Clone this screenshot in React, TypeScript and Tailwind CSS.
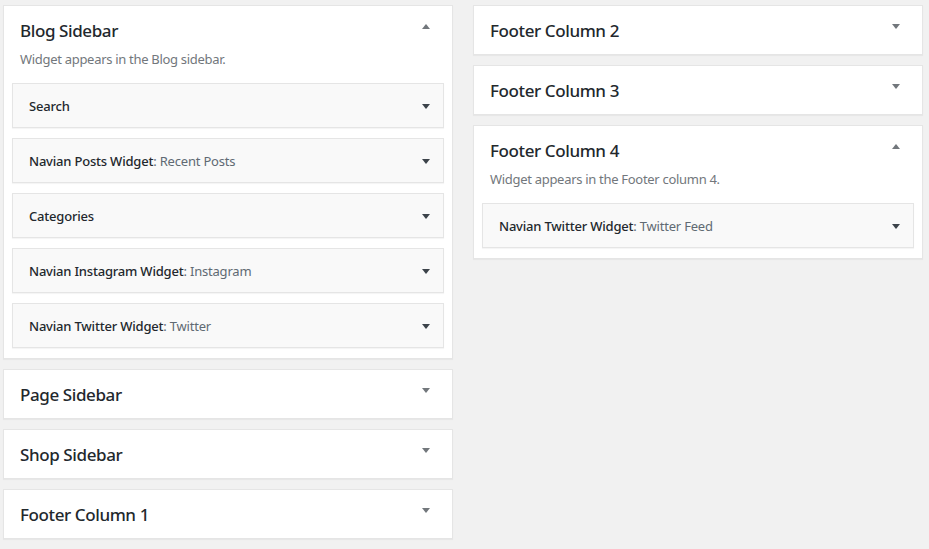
import React from 'react'

type Widget = { name: string; title?: string }

type Area = {
  name: string
  open?: boolean
  description?: string
  widgets?: Widget[]
}

const leftAreas: Area[] = [
  {
    name: 'Blog Sidebar',
    open: true,
    description: 'Widget appears in the Blog sidebar.',
    widgets: [
      { name: 'Search' },
      { name: 'Navian Posts Widget', title: 'Recent Posts' },
      { name: 'Categories' },
      { name: 'Navian Instagram Widget', title: 'Instagram' },
      { name: 'Navian Twitter Widget', title: 'Twitter' },
    ],
  },
  { name: 'Page Sidebar' },
  { name: 'Shop Sidebar' },
  { name: 'Footer Column 1' },
]

const rightAreas: Area[] = [
  { name: 'Footer Column 2' },
  { name: 'Footer Column 3' },
  {
    name: 'Footer Column 4',
    open: true,
    description: 'Widget appears in the Footer column 4.',
    widgets: [{ name: 'Navian Twitter Widget', title: 'Twitter Feed' }],
  },
]

const ArrowDown = ({ dark }: { dark?: boolean }) => (
  <span
    className={`block w-0 h-0 border-x-[4px] border-x-transparent border-t-[5px] ${dark ? 'border-t-[#3c434a]' : 'border-t-[#72777c]'}`}
  />
)

const ArrowUp = () => (
  <span className="block w-0 h-0 border-x-[4px] border-x-transparent border-b-[5px] border-b-[#72777c]" />
)

const WidgetRow = ({ widget }: { widget: Widget }) => (
  <div className="flex items-center justify-between bg-[#f9f9f9] border border-[#e5e5e5] shadow-[0_1px_1px_rgba(0,0,0,0.04)] pl-[16px] pr-[13px] pt-[13px] pb-[11px]">
    <span className="text-[13px] leading-[19px] text-[#23282d] font-medium tracking-[-0.2px]">
      {widget.name}
      {widget.title && <span className="font-normal text-[#606a73]">: {widget.title}</span>}
    </span>
    <span className="-mt-[1px]">
      <ArrowDown dark />
    </span>
  </div>
)

const SidebarPanel = ({ area }: { area: Area }) => (
  <div className="bg-white border border-[#e5e5e5] shadow-[0_1px_1px_rgba(0,0,0,0.04)]">
    <div className={`flex items-start justify-between pl-[16px] pr-[22px] pt-[13px] ${area.open ? 'pb-[7px]' : 'pb-[11px]'}`}>
      <h2 className="text-[17px] leading-[24px] text-[#23282d] font-medium tracking-[-0.4px]">{area.name}</h2>
      <span className="mt-[5px]">{area.open ? <ArrowUp /> : <ArrowDown />}</span>
    </div>
    {area.open && (
      <div className="px-[8px] pb-[10px]">
        <p className="px-[8px] text-[13px] leading-[18px] text-[#72777c] tracking-[-0.3px] mb-[15px]">
          {area.description}
        </p>
        <div className="flex flex-col gap-[10px]">
          {area.widgets?.map((w) => (
            <WidgetRow key={w.name + (w.title ?? '')} widget={w} />
          ))}
        </div>
      </div>
    )}
  </div>
)

export default function App() {
  return (
    <div
      className="min-h-[549px] bg-[#f1f1f1] pt-[5px] pl-[3px] flex gap-[20px] items-start"
      style={{ fontFamily: '"Noto Sans", "Open Sans", sans-serif' }}
    >
      <div className="w-[450px] flex flex-col gap-[10px]">
        {leftAreas.map((a) => (
          <SidebarPanel key={a.name} area={a} />
        ))}
      </div>
      <div className="w-[450px] flex flex-col gap-[10px]">
        {rightAreas.map((a) => (
          <SidebarPanel key={a.name} area={a} />
        ))}
      </div>
    </div>
  )
}
